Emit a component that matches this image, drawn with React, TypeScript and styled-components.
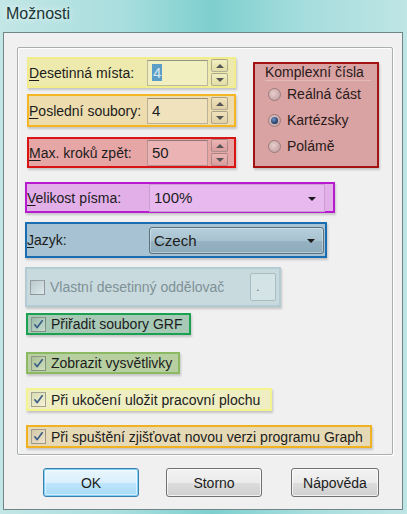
import React from "react";
import styled, { createGlobalStyle, css } from "styled-components";

const Global = createGlobalStyle`
  html, body { margin: 0; padding: 0; }
  body {
    width: 407px; height: 514px; overflow: hidden;
    font-family: "Liberation Sans", Arial, sans-serif;
    background: linear-gradient(90deg, #c3e6e6 0%, #a9dede 30%, #7ecfcf 52%, #a6dddd 75%, #bfe5e5 100%);
  }
  * { box-sizing: border-box; }
`;

const Frame = styled.div`
  width: 407px;
  height: 514px;
  display: flex;
  flex-direction: column;
`;

const TitleBar = styled.div`
  height: 32px;
  display: flex;
  align-items: center;
  padding: 0 0 4px 6px;
  font-size: 16px;
  color: #1b3434;
  text-shadow: 0 0 6px rgba(255,255,255,0.9);
`;

const Client = styled.div`
  margin: 0 4px 0 3px;
  height: 478px;
  border: 1px solid #6f8686;
  background: #f0f0f0;
  display: flex;
  flex-direction: column;
`;

const GroupBox = styled.div`
  margin: 14px 0 0 13px;
  width: 376px;
  height: 408px;
  border: 1px solid #a9aeb0;
  border-radius: 2px;
  box-shadow: inset 1px 1px 0 #ffffff, 1px 1px 0 #ffffff;
  display: flex;
  flex-direction: column;
`;

const TopRow = styled.div`
  display: flex;
  margin: 9px 0 0 9px;
`;

const LeftCol = styled.div`
  display: flex;
  flex-direction: column;
  width: 209px;
`;

const Zone = styled.div<{ $bg: string; $bd: string; $w: number; $h: number; $mt?: number; $ml?: number }>`
  width: ${(p) => p.$w}px;
  height: ${(p) => p.$h}px;
  margin-top: ${(p) => p.$mt ?? 0}px;
  margin-left: ${(p) => p.$ml ?? 0}px;
  background: ${(p) => p.$bg};
  border: 2px solid ${(p) => p.$bd};
  box-shadow: 1px 2px 2px rgba(0, 0, 0, 0.18);
  display: flex;
  align-items: center;
  flex-shrink: 0;
`;

const Label = styled.span<{ $w?: number; $dim?: boolean }>`
  font-size: 14px;
  color: ${(p) => (p.$dim ? "#7e9196" : "#1c1c1c")};
  ${(p) => (p.$w ? css`width: ${p.$w}px; flex-shrink: 0;` : "")}
  white-space: nowrap;
  u { text-decoration: underline; text-underline-offset: 2px; }
`;

const EditBox = styled.div<{ $tint: string }>`
  width: 61px;
  height: 26px;
  border: 1px solid rgba(90, 90, 90, 0.35);
  border-top-color: rgba(60, 60, 60, 0.5);
  background: ${(p) => p.$tint};
  display: flex;
  align-items: center;
  padding-left: 4px;
  font-size: 15px;
  color: #1c1c1c;
`;

const Selected = styled.span`
  background: #5a9ec8;
  color: #d9e6ea;
  padding: 0 1px;
  line-height: 17px;
`;

const Spinner = styled.div`
  margin-left: 3px;
  width: 17px;
  height: 27px;
  display: flex;
  flex-direction: column;
  gap: 1px;
`;

const SpinBtn = styled.div<{ $tint: string }>`
  flex: 1;
  border: 1px solid rgba(100, 100, 100, 0.45);
  border-radius: 2px;
  background: linear-gradient(${(p) => p.$tint}, rgba(0,0,0,0.05));
  display: flex;
  align-items: center;
  justify-content: center;
`;

const Tri = styled.span<{ $up?: boolean }>`
  width: 0;
  height: 0;
  border-left: 4px solid transparent;
  border-right: 4px solid transparent;
  ${(p) =>
    p.$up
      ? css`border-bottom: 4px solid #555;`
      : css`border-top: 4px solid #555;`}
`;

const RadioGroup = styled.div`
  margin: 5px 0 0 17px;
  width: 126px;
  height: 106px;
  background: #d9a3a3;
  border: 2px solid #a31313;
  box-shadow: 1px 2px 2px rgba(0, 0, 0, 0.18);
  display: flex;
  flex-direction: column;
  padding-left: 10px;
`;

const GroupTitle = styled.div`
  height: 17px;
  display: flex;
  align-items: center;
  font-size: 14px;
  color: #2a1a1a;
  border-bottom: 1px solid rgba(255,255,255,0.25);
  margin-right: 6px;
`;

const RadioRow = styled.div`
  height: 26px;
  display: flex;
  align-items: center;
  gap: 6px;
  font-size: 14px;
  color: #2a1a1a;
  padding-left: 3px;
`;

const RadioDot = styled.span<{ $on?: boolean }>`
  width: 13px;
  height: 13px;
  border-radius: 50%;
  border: 1px solid #9a7a7a;
  background: radial-gradient(circle at 40% 40%, #e8cccc 0%, #c9a8a8 70%, #b89898 100%);
  display: flex;
  align-items: center;
  justify-content: center;
  &::after {
    content: "";
    display: ${(p) => (p.$on ? "block" : "none")};
    width: 7px;
    height: 7px;
    border-radius: 50%;
    background: radial-gradient(circle at 40% 35%, #6c94c8, #142c52 80%);
  }
`;

const Combo = styled.div<{ $button?: boolean; $tint: string; $w: number; $h: number }>`
  width: ${(p) => p.$w}px;
  height: ${(p) => p.$h}px;
  display: flex;
  align-items: center;
  justify-content: space-between;
  padding: 0 8px 0 4px;
  font-size: 15px;
  color: #1c1c1c;
  ${(p) =>
    p.$button
      ? css`
          border: 1px solid #5a7280;
          border-radius: 3px;
          background: linear-gradient(#b6cfdc 0%, #a8c2d0 50%, #97b3c3 51%, #8eabbb 100%);
          box-shadow: inset 0 0 0 1px rgba(255,255,255,0.35);
        `
      : css`
          border: 1px solid rgba(120, 80, 130, 0.25);
          background: ${p.$tint};
        `}
`;

const Arrow = styled.span`
  width: 0;
  height: 0;
  border-left: 4px solid transparent;
  border-right: 4px solid transparent;
  border-top: 4px solid #1a1a1a;
  margin-top: 2px;
`;

const CheckBox = styled.span<{ $tint: string }>`
  width: 15px;
  height: 15px;
  margin: 0 5px 0 3px;
  border: 1px solid rgba(80, 80, 80, 0.45);
  background: linear-gradient(135deg, rgba(0,0,0,0.08), ${(p) => p.$tint});
  display: flex;
  align-items: center;
  justify-content: center;
  flex-shrink: 0;
`;

const SmallEdit = styled.div`
  margin-left: auto;
  margin-right: 3px;
  width: 26px;
  height: 28px;
  border: 1px solid #a9bcc2;
  border-radius: 2px;
  background: #d4e3e6;
  display: flex;
  align-items: flex-end;
  padding: 0 0 6px 5px;
  font-size: 13px;
  color: #6a7a80;
`;

const ButtonRow = styled.div`
  display: flex;
  margin: 13px 0 0 39px;
`;

const Button = styled.button<{ $w: number; $ml?: number; $default?: boolean }>`
  width: ${(p) => p.$w}px;
  height: 29px;
  margin-left: ${(p) => p.$ml ?? 0}px;
  font-family: "Liberation Sans", Arial, sans-serif;
  font-size: 14px;
  color: #1c1c1c;
  border-radius: 3px;
  padding: 0;
  ${(p) =>
    p.$default
      ? css`
          border: 1px solid #3c7fb1;
          background: linear-gradient(#eaf6fd 0%, #d9f0fc 50%, #bee6fd 51%, #a7d9f5 100%);
          box-shadow: inset 0 0 0 1px #7fd0f5, inset 0 0 0 2px rgba(255,255,255,0.5);
        `
      : css`
          border: 1px solid #707070;
          background: linear-gradient(#f2f2f2 0%, #ebebeb 50%, #dddddd 51%, #cfcfcf 100%);
          box-shadow: inset 0 0 0 1px rgba(255,255,255,0.7);
        `}
`;

const Check = () => (
  <svg width="11" height="11" viewBox="0 0 11 11">
    <path d="M1.8 5.8 L4.2 8.6 L9.2 1.8" fill="none" stroke="#3d5f86" strokeWidth="1.7" strokeLinecap="round" strokeLinejoin="round" />
  </svg>
);

const SpinEdit: React.FC<{ tint: string; value: React.ReactNode }> = ({ tint, value }) => (
  <>
    <EditBox $tint={tint}>{value}</EditBox>
    <Spinner>
      <SpinBtn $tint={tint}><Tri $up /></SpinBtn>
      <SpinBtn $tint={tint}><Tri /></SpinBtn>
    </Spinner>
  </>
);

const CheckZone: React.FC<{ bg: string; bd: string; w: number; mt: number; h?: number; tint: string; text: string }> = ({ bg, bd, w, mt, h = 22, tint, text }) => (
  <Zone $bg={bg} $bd={bd} $w={w} $h={h} $mt={mt} $ml={8}>
    <CheckBox $tint={tint}><Check /></CheckBox>
    <Label>{text}</Label>
  </Zone>
);

export default function App() {
  return (
    <>
      <Global />
      <Frame>
        <TitleBar>Možnosti</TitleBar>
        <Client>
          <GroupBox>
            <TopRow>
              <LeftCol>
                <Zone $bg="#eeeaae" $bd="#f1ed8c" $w={209} $h={31}>
                  <Label $w={118}><u>D</u>esetinná místa:</Label>
                  <SpinEdit tint="#f1eec0" value={<Selected>4</Selected>} />
                </Zone>
                <Zone $bg="#ecdcae" $bd="#f4b622" $w={209} $h={33} $mt={6}>
                  <Label $w={118}><u>P</u>oslední soubory:</Label>
                  <SpinEdit tint="#efe2bc" value="4" />
                </Zone>
                <Zone $bg="#e7a6a6" $bd="#d81414" $w={209} $h={31} $mt={10}>
                  <Label $w={118}><u>M</u>ax. kroků zpět:</Label>
                  <SpinEdit tint="#ebb3b3" value="50" />
                </Zone>
              </LeftCol>
              <RadioGroup>
                <GroupTitle>Komplexní čísla</GroupTitle>
                <RadioRow><RadioDot />Reálná část</RadioRow>
                <RadioRow><RadioDot $on />Kartézsky</RadioRow>
                <RadioRow><RadioDot />Polámě</RadioRow>
              </RadioGroup>
            </TopRow>

            <Zone $bg="#e2afe9" $bd="#b81ad0" $w={310} $h={31} $mt={14} $ml={7}>
              <Label $w={122}><u>V</u>elikost písma:</Label>
              <Combo $tint="#e7b9ee" $w={176} $h={28}>
                100%<Arrow />
              </Combo>
            </Zone>

            <Zone $bg="#a7c3d3" $bd="#1b6db2" $w={302} $h={36} $mt={9} $ml={7}>
              <Label $w={122}><u>J</u>azyk:</Label>
              <Combo $button $tint="#a8c2d0" $w={175} $h={27}>
                Czech<Arrow />
              </Combo>
            </Zone>

            <Zone $bg="#c9dadf" $bd="#b3ccd3" $w={256} $h={40} $mt={9} $ml={7}>
              <CheckBox $tint="#dde8ea" />
              <Label $dim>Vlastní desetinný oddělovač</Label>
              <SmallEdit>.</SmallEdit>
            </Zone>

            <CheckZone bg="#a7c9b6" bd="#1ba152" w={165} mt={6} tint="#c6dccf" text="Přiřadit soubory GRF" />
            <CheckZone bg="#b7cfa1" bd="#8bba62" w={154} mt={17} tint="#cfdfc0" text="Zobrazit vysvětlivky" />
            <CheckZone bg="#eeeec2" bd="#f4f48e" w={246} mt={14} h={23} tint="#f3f3d6" text="Při ukočení uložit pracovní plochu" />
            <CheckZone bg="#e6d9b6" bd="#f1b222" w={346} mt={14} h={23} tint="#eee4cc" text="Při spuštění zjišťovat novou verzi programu Graph" />
          </GroupBox>

          <ButtonRow>
            <Button $w={96} $default>OK</Button>
            <Button $w={96} $ml={27}>Storno</Button>
            <Button $w={88} $ml={29}>Nápověda</Button>
          </ButtonRow>
        </Client>
      </Frame>
    </>
  );
}
